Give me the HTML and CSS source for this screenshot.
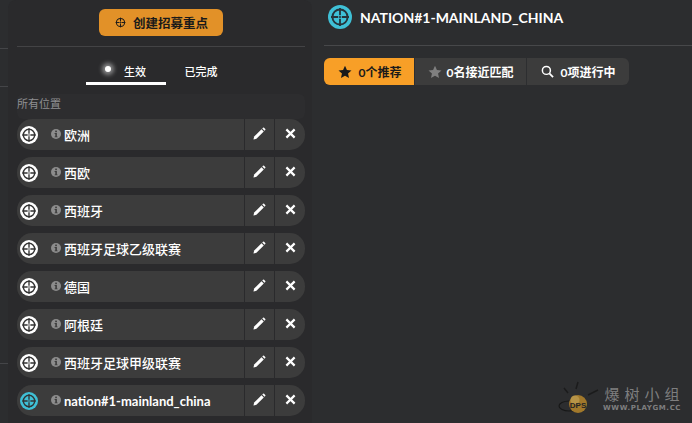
FILE: index.html
```html
<!DOCTYPE html>
<html lang="en">
<head>
    <meta charset="UTF-8">
    <title>Scout Focus</title>
    <link rel="stylesheet" href="styles.css">
</head>
<body>
    <svg width="0" height="0" class="defs">
        <defs>
            <symbol id="target" viewBox="0 0 20 20">
                <circle cx="10" cy="10" r="6.300" fill="none" stroke="currentColor" stroke-width="1.600"/>
                <path d="M10 2.500v6M10 11.500v6M2.500 10h6M11.500 10h6" stroke="currentColor" stroke-width="1.500" fill="none"/>
                <circle cx="10" cy="10" r=".9" fill="currentColor"/>
            </symbol>
            <symbol id="info" viewBox="0 0 10 10">
                <circle cx="5" cy="5" r="5" fill="#8c8c8c"/>
                <rect x="4.200" y="1.600" width="1.700" height="1.600" fill="#3c3c3c"/>
                <path d="M3.600 4h2.300v3.400h.7v.9H3.600v-.9h.7V4.900h-.7z" fill="#3c3c3c"/>
            </symbol>
            <symbol id="pencil" viewBox="0 0 14 14">
                <path d="M.5 13.500l.8-3.200 7.900-7.900 2.400 2.400-7.900 7.900z" fill="currentColor"/>
                <path d="M10 1.600l.8-.8a.8.8 0 0 1 1.100 0l1.300 1.300a.8.8 0 0 1 0 1.100l-.8.8z" fill="currentColor"/>
            </symbol>
            <symbol id="cross" viewBox="0 0 12 12">
                <path d="M1.500 1.500l9 9M10.500 1.500l-9 9" stroke="currentColor" stroke-width="2.400" fill="none"/>
            </symbol>
            <symbol id="star" viewBox="0 0 16 16">
                <path d="M8 .8l2.200 4.800 5.200.6-3.900 3.500 1.100 5.200L8 12.300l-4.600 2.600 1.100-5.200L.6 6.200l5.200-.6z" fill="currentColor"/>
            </symbol>
        </defs>
    </svg>

    <!-- Edge of the nav column -->
    <div class="stub">
        <hr class="stub-line first">
        <hr class="stub-line second">
        <hr class="stub-line third">
    </div>

    <!-- Left panel -->
    <aside class="panel">
        <div class="create-wrap">
            <button class="create-btn">
                <svg class="create-icon"><use href="#target"/></svg>
                创建招募重点
            </button>
        </div>
        <div class="tabs">
            <a class="tab active"><span class="tab-dot"></span>生效</a>
            <a class="tab done">已完成</a>
        </div>
        <div class="section-title">所有位置</div>
        <ul class="focus-list">
            <li class="focus-row">
                <span class="badge"><svg><use href="#target"/></svg></span>
                <svg class="info"><use href="#info"/></svg>
                <span class="name">欧洲</span>
                <a class="row-btn"><svg class="pencil"><use href="#pencil"/></svg></a>
                <a class="row-btn close"><svg class="cross"><use href="#cross"/></svg></a>
            </li>
            <li class="focus-row">
                <span class="badge"><svg><use href="#target"/></svg></span>
                <svg class="info"><use href="#info"/></svg>
                <span class="name">西欧</span>
                <a class="row-btn"><svg class="pencil"><use href="#pencil"/></svg></a>
                <a class="row-btn close"><svg class="cross"><use href="#cross"/></svg></a>
            </li>
            <li class="focus-row">
                <span class="badge"><svg><use href="#target"/></svg></span>
                <svg class="info"><use href="#info"/></svg>
                <span class="name">西班牙</span>
                <a class="row-btn"><svg class="pencil"><use href="#pencil"/></svg></a>
                <a class="row-btn close"><svg class="cross"><use href="#cross"/></svg></a>
            </li>
            <li class="focus-row">
                <span class="badge"><svg><use href="#target"/></svg></span>
                <svg class="info"><use href="#info"/></svg>
                <span class="name">西班牙足球乙级联赛</span>
                <a class="row-btn"><svg class="pencil"><use href="#pencil"/></svg></a>
                <a class="row-btn close"><svg class="cross"><use href="#cross"/></svg></a>
            </li>
            <li class="focus-row">
                <span class="badge"><svg><use href="#target"/></svg></span>
                <svg class="info"><use href="#info"/></svg>
                <span class="name">德国</span>
                <a class="row-btn"><svg class="pencil"><use href="#pencil"/></svg></a>
                <a class="row-btn close"><svg class="cross"><use href="#cross"/></svg></a>
            </li>
            <li class="focus-row">
                <span class="badge"><svg><use href="#target"/></svg></span>
                <svg class="info"><use href="#info"/></svg>
                <span class="name">阿根廷</span>
                <a class="row-btn"><svg class="pencil"><use href="#pencil"/></svg></a>
                <a class="row-btn close"><svg class="cross"><use href="#cross"/></svg></a>
            </li>
            <li class="focus-row">
                <span class="badge"><svg><use href="#target"/></svg></span>
                <svg class="info"><use href="#info"/></svg>
                <span class="name">西班牙足球甲级联赛</span>
                <a class="row-btn"><svg class="pencil"><use href="#pencil"/></svg></a>
                <a class="row-btn close"><svg class="cross"><use href="#cross"/></svg></a>
            </li>
            <li class="focus-row">
                <span class="badge cyan"><svg><use href="#target"/></svg></span>
                <svg class="info"><use href="#info"/></svg>
                <span class="name latin">nation#1-mainland_china</span>
                <a class="row-btn"><svg class="pencil"><use href="#pencil"/></svg></a>
                <a class="row-btn close"><svg class="cross"><use href="#cross"/></svg></a>
            </li>
        </ul>
    </aside>

    <!-- Main content -->
    <main class="content">
        <header class="title-bar">
            <span class="title-badge"><svg><use href="#target"/></svg></span>
            <h1>NATION#1-MAINLAND_CHINA</h1>
        </header>
        <div class="filters">
            <a class="filter active"><svg class="star"><use href="#star"/></svg>0个推荐</a>
            <a class="filter near"><svg class="star"><use href="#star"/></svg>0名接近匹配</a>
            <a class="filter search">
                <svg class="glass" viewBox="0 0 14 14"><circle cx="5.800" cy="5.800" r="4.300" fill="none" stroke="currentColor" stroke-width="1.600"/><path d="M9 9l4 4" stroke="currentColor" stroke-width="1.900"/></svg>
                0项进行中
            </a>
        </div>
    </main>

    <!-- Watermark -->
    <div class="watermark">
        <svg class="wm-logo" viewBox="0 0 44 40">
            <path d="M7 8l4 5M21 2l-2 7M31 15l10-5" stroke="#161616" stroke-width="1.500"/>
            <ellipse cx="12" cy="26" rx="10" ry="5" fill="none" stroke="#111" stroke-width="1.200"/>
            <circle cx="21" cy="24" r="9" fill="#c8922a"/>
            <circle cx="18" cy="20" r="4.500" fill="#e6b750"/>
            <text x="21" y="28" class="wm-dps">DPS</text>
        </svg>
        <div class="wm-text">
            <span class="wm-cn">爆树小组</span>
            <span class="wm-url">WWW.PLAYGM.CC</span>
        </div>
    </div>
</body>
</html>
```

FILE: styles.css
```css
* {
    box-sizing: border-box;
}

html, body {
    height: 100%;
}

body {
    margin: 0;
    display: flex;
    height: 423px;
    overflow: hidden;
    position: relative;
    background: #2c2d2f;
    color: #fff;
    font-family: 'Lato', 'Noto Sans CJK SC', sans-serif;
    font-weight: 700;
}

.defs {
    position: absolute;
}

.stub {
    width: 8px;
    flex-shrink: 0;
    padding-top: 48px;
}

.stub-line {
    margin: 0;
    border: 0;
    height: 1px;
    background: #444548;
}

.stub-line.second {
    margin-top: 37px;
}

.stub-line.third {
    margin-top: 276px;
}

.panel {
    width: 304px;
    flex-shrink: 0;
    background: #2a2a2c;
    border-radius: 8px 8px 0 0;
    padding: 0 7px 0 9px;
}

.create-wrap {
    height: 47px;
    padding-top: 9px;
    display: flex;
    justify-content: center;
    border-bottom: 1px solid #434345;
}

.create-btn {
    width: 124px;
    height: 27px;
    border: 0;
    border-radius: 6px;
    background: #e29128;
    color: #1a1a1a;
    font-family: inherit;
    font-weight: 700;
    font-size: 12.500px;
    display: flex;
    align-items: center;
    justify-content: center;
    gap: 6px;
    padding: 0;
}

.create-icon {
    width: 13px;
    height: 13px;
}

.tabs {
    display: flex;
    justify-content: center;
    height: 39px;
    margin-right: 2px;
}

.tab {
    height: 38px;
    font-size: 11px;
    font-weight: 500;
    line-height: 50px;
    text-align: center;
    position: relative;
}

.tab.active {
    width: 80px;
    border-bottom: 3px solid #fff;
    padding-left: 18px;
}

.tab.done {
    width: 68px;
    padding-left: 2px;
}

.tab-dot {
    position: absolute;
    left: 19px;
    top: 19px;
    width: 6px;
    height: 6px;
    border-radius: 50%;
    background: #fff;
    box-shadow: 0 0 4px 3px rgba(255, 255, 255, 0.45);
}

.section-title {
    height: 25px;
    margin-top: 8px;
    background: #2d2d2f;
    border-radius: 6px;
    color: #8f8f92;
    font-size: 11px;
    font-weight: 400;
    line-height: 19px;
}

.focus-list {
    list-style: none;
    margin: 0;
    padding: 0;
    display: flex;
    flex-direction: column;
    gap: 7px;
}

.focus-row {
    height: 31px;
    width: 288px;
    display: flex;
    align-items: center;
    background: #3c3c3c;
    border-radius: 15px;
    padding-left: 3px;
}

.badge {
    width: 18px;
    height: 18px;
    border-radius: 50%;
    background: #fff;
    color: #333;
    display: flex;
    margin-right: 13px;
}

.badge svg {
    width: 18px;
    height: 18px;
}

.badge.cyan {
    background: #3fc0d6;
}

.info {
    width: 10px;
    height: 10px;
    margin-right: 3px;
    margin-top: -2px;
}

.name {
    flex: 1;
    font-size: 13px;
    font-weight: 500;
    white-space: nowrap;
}

.name.latin {
    font-weight: 700;
}

.row-btn {
    width: 30px;
    height: 31px;
    border-left: 1px solid #2a2a2c;
    display: flex;
    align-items: center;
    justify-content: center;
}

.row-btn.close {
    width: 31px;
}

.pencil {
    width: 13px;
    height: 13px;
    margin-top: -2px;
}

.cross {
    width: 11px;
    height: 11px;
    margin-top: -2px;
}

.content {
    flex: 1;
    padding: 0 0 0 12px;
}

.title-bar {
    height: 46px;
    display: flex;
    align-items: center;
    border-bottom: 1px solid #47484a;
    padding: 0 0 11px 4px;
}

.title-badge {
    width: 24px;
    height: 24px;
    border-radius: 50%;
    background: #3fc0d6;
    color: #26333a;
    display: flex;
    margin-right: 8px;
}

.title-badge svg {
    width: 24px;
    height: 24px;
}

h1 {
    margin: 0;
    font-size: 14px;
    font-weight: 700;
}

.filters {
    display: inline-flex;
    margin-top: 12px;
    height: 27px;
    border-radius: 6px;
    overflow: hidden;
    background: #3c3c3c;
    font-size: 12px;
}

.filter {
    display: flex;
    align-items: center;
    justify-content: center;
    height: 100%;
}

.filter.active {
    width: 90px;
    background: #f89f27;
    color: #1a1a1a;
    gap: 7px;
    padding-left: 1px;
}

.filter.near {
    width: 113px;
    border-right: 1px solid #2d2e30;
    gap: 5px;
    border-left: 1px solid #2d2e30;
}

.filter.near .star {
    color: #7f7f7f;
}

.filter.search {
    width: 102px;
    gap: 7px;
}

.star {
    width: 14px;
    height: 14px;
}

.glass {
    width: 13px;
    height: 13px;
}

/* sits over the page corner */
.watermark {
    position: absolute;
    left: 557px;
    top: 380px;
    display: flex;
    align-items: center;
    opacity: 0.75;
}

.wm-logo {
    width: 44px;
    height: 40px;
}

.wm-dps {
    font-family: 'Liberation Sans', sans-serif;
    font-size: 8px;
    font-weight: 700;
    text-anchor: middle;
    fill: #222;
}

.wm-text {
    display: flex;
    flex-direction: column;
    align-items: center;
    margin-left: 2px;
    color: #9a9a9a;
}

.wm-cn {
    font-family: 'Noto Sans CJK SC', sans-serif;
    font-size: 15px;
    line-height: 16px;
    letter-spacing: 5px;
    margin-right: -5px;
    font-weight: 400;
}

.wm-url {
    font-family: 'DejaVu Sans', sans-serif;
    font-size: 7px;
    line-height: 13px;
    font-weight: 700;
    letter-spacing: 0.6px;
}
```
